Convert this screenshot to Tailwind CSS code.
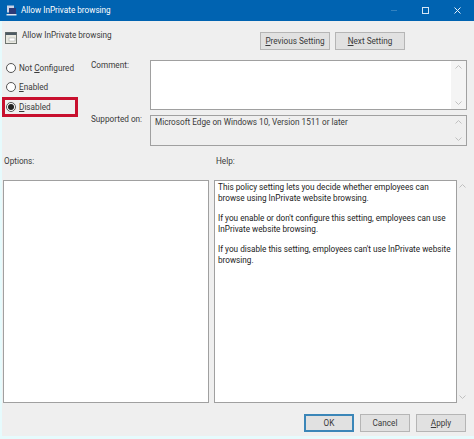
<!DOCTYPE html>
<html lang="en">
<head>
  <meta charset="UTF-8">
  <title>Allow InPrivate browsing</title>
  <script src="https://cdn.jsdelivr.net/npm/@tailwindcss/browser@4"></script>
</head>
<body class="w-[474px] h-[439px] overflow-hidden bg-[#efefef] text-[#3a3a3a] text-[8.2px] leading-[11px] font-['Roboto',sans-serif]">

  <!-- Title bar -->
  <header class="h-[21px] bg-[#0063b1] text-white flex items-center pl-[6px]">
    <svg class="w-[11px] h-[11px] mr-[4px]" viewBox="0 0 11 11">
      <rect x="1" y="0.5" width="7" height="7" fill="#c9d3e6"/>
      <rect x="3" y="3" width="7" height="6" fill="#2b3a78"/>
      <rect x="0.5" y="9" width="10" height="1.5" fill="#dfe5ee"/>
    </svg>
    <span>Allow InPrivate browsing</span>
    <div class="ml-auto flex items-center">
      <div class="w-[6px] h-px bg-white/20 mr-[25px]"></div>
      <div class="w-[7px] h-[7px] border border-[#d5e6f5] mr-[25px]"></div>
      <svg class="w-[7px] h-[7px] mr-[13px]" viewBox="0 0 7 7" stroke="#e6f0fa" stroke-width="1"><path d="M0.5 0.5l6 6M6.5 0.5l-6 6"/></svg>
    </div>
  </header>

  <div class="border-l-2 border-b-[3px] border-[#e6fbfd] h-[418px] flex flex-col">
    <!-- Policy name + nav buttons -->
    <div class="h-[39px] flex items-start pt-[10px] pl-[3px]">
      <svg class="w-[12px] h-[12px] mr-[5px] mt-[1px]" viewBox="0 0 12 12">
        <rect x="0.5" y="0.5" width="11" height="11" fill="#e8e8e0" stroke="#6f7570"/>
        <rect x="0.5" y="0.5" width="11" height="2.5" fill="#4d5a63"/>
        <rect x="4" y="6" width="6" height="3" fill="#fff" stroke="#9aa0a0" stroke-width="0.5"/>
      </svg>
      <span class="mt-[-1px]">Allow InPrivate browsing</span>
      <div class="ml-auto flex gap-[5px] mr-[69px] mt-[1px]">
        <button class="w-[70px] h-[18px] bg-[#e1e1e1] border border-[#b5b5b5]"><span class="underline">P</span>revious Setting</button>
        <button class="w-[70px] h-[18px] bg-[#e1e1e1] border border-[#b5b5b5]"><span class="underline">N</span>ext Setting</button>
      </div>
    </div>

    <!-- State + comment -->
    <div class="h-[86px] flex">
      <div class="w-[89px] relative">
        <div class="flex flex-col gap-[7px] pl-[4px] pt-[2px]">
          <label class="flex items-center gap-[3px] h-[12px]"><span class="w-[10px] h-[10px] rounded-full border border-[#555] bg-white"></span><span>Not <span class="underline">C</span>onfigured</span></label>
          <label class="flex items-center gap-[3px] h-[12px]"><span class="w-[10px] h-[10px] rounded-full border border-[#555] bg-white"></span><span><span class="underline">E</span>nabled</span></label>
          <label class="flex items-center gap-[3px] h-[12px] mt-[1px]"><span class="w-[10px] h-[10px] rounded-full border border-[#555] bg-white flex items-center justify-center"><span class="w-[6px] h-[6px] rounded-full bg-[#222]"></span></span><span><span class="underline">D</span>isabled</span></label>
        </div>
        <!-- red highlight -->
        <div class="absolute left-0 top-[37px] w-[76px] h-[20px] border-[3px] border-[#c8102e]"></div>
      </div>
      <div class="w-[59px] flex flex-col whitespace-nowrap">
        <span>Comment:</span>
        <span class="mt-[43px]">Supported on:</span>
      </div>
      <div class="w-[317px] flex flex-col gap-[5px]">
        <div class="h-[50px] bg-white border border-[#a0a0a0] flex justify-end">
          <div class="w-[15px] bg-[#f4f4f4] flex flex-col items-center justify-between py-[4px] text-[#c0c0c0]">
            <svg class="w-[7px] h-[4px]" viewBox="0 0 7 4" fill="none" stroke="currentColor"><path d="M0.5 3.5l3-3 3 3"/></svg>
            <svg class="w-[7px] h-[4px]" viewBox="0 0 7 4" fill="none" stroke="currentColor"><path d="M0.5 0.5l3 3 3-3"/></svg>
          </div>
        </div>
        <div class="h-[31px] bg-[#efefef] border border-[#a0a0a0] flex justify-between pl-[4px]">
          <span class="pt-[1px]">Microsoft Edge on Windows 10, Version 1511 or later</span>
          <div class="w-[15px] flex flex-col items-center justify-between py-[4px] text-[#c0c0c0]">
            <svg class="w-[7px] h-[4px]" viewBox="0 0 7 4" fill="none" stroke="currentColor"><path d="M0.5 3.5l3-3 3 3"/></svg>
            <svg class="w-[7px] h-[4px]" viewBox="0 0 7 4" fill="none" stroke="currentColor"><path d="M0.5 0.5l3 3 3-3"/></svg>
          </div>
        </div>
      </div>
    </div>

    <!-- Pane labels -->
    <div class="h-[34px] flex pt-[10px] pl-[2px]">
      <span class="w-[212px]">Options:</span>
      <span>Help:</span>
    </div>

    <!-- Panes -->
    <div class="h-[223px] flex pl-px">
      <div class="w-[206px] bg-white border border-[#a0a0a0]"></div>
      <div class="w-[254px] ml-[5px] flex">
        <div class="w-[243px] bg-white border border-[#a0a0a0] px-[3px] pt-px text-[#222]">
          <p>This policy setting lets you decide whether employees can browse using InPrivate website browsing.</p>
          <p class="mt-[9px]">If you enable or don't configure this setting, employees can use InPrivate website browsing.</p>
          <p class="mt-[9px]">If you disable this setting, employees can't use InPrivate website browsing.</p>
        </div>
        <div class="w-[11px] flex flex-col items-center justify-between py-[4px] text-[#c0c0c0]">
          <svg class="w-[7px] h-[4px]" viewBox="0 0 7 4" fill="none" stroke="currentColor"><path d="M0.5 3.5l3-3 3 3"/></svg>
          <svg class="w-[7px] h-[4px]" viewBox="0 0 7 4" fill="none" stroke="currentColor"><path d="M0.5 0.5l3 3 3-3"/></svg>
        </div>
      </div>
    </div>

    <!-- Footer buttons -->
    <div class="flex justify-end gap-[6px] pr-[8px] pt-[11px]">
      <button class="w-[50px] h-[18px] bg-[#e1e1e1] border-2 border-[#3b86b8]">OK</button>
      <button class="w-[50px] h-[18px] bg-[#e1e1e1] border border-[#b5b5b5]">Cancel</button>
      <button class="w-[50px] h-[18px] bg-[#e1e1e1] border border-[#b5b5b5]"><span class="underline">A</span>pply</button>
    </div>
  </div>
</body>
</html>
